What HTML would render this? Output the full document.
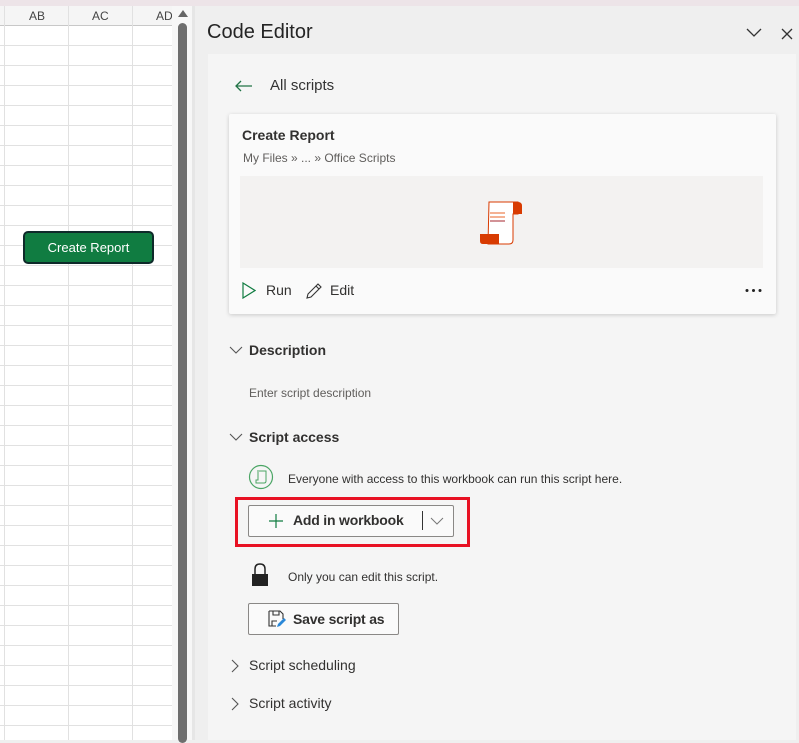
<!DOCTYPE html>
<html><head><meta charset="utf-8"><style>
*{margin:0;padding:0;box-sizing:border-box}
body{width:799px;height:740px;overflow:hidden;background:#efefef;font-family:"Liberation Sans",sans-serif;position:relative;color:#242424}
.a{position:absolute}
.t{position:absolute;white-space:nowrap}
</style></head><body>
<div class="a" style="left:0;top:0;width:799px;height:6px;background:#ede4e8"></div>
<div class="a" style="left:0;top:6px;width:172px;height:20px;background:#f5f5f5;border-bottom:1px solid #c8c8c8"></div>
<div class="a" style="left:0;top:26px;width:172px;height:714px;background:#fff;
background-image:repeating-linear-gradient(to bottom,transparent 0,transparent 19px,#e1e1e1 19px,#e1e1e1 20px)"></div>
<div class="a" style="left:4px;top:6px;width:1px;height:734px;background:#e1e1e1"></div>
<div class="a" style="left:68px;top:6px;width:1px;height:734px;background:#e1e1e1"></div>
<div class="a" style="left:132px;top:6px;width:1px;height:734px;background:#e1e1e1"></div>
<div class="t" style="left:29px;top:9px;font-size:12px;color:#444">AB</div>
<div class="t" style="left:92px;top:9px;font-size:12px;color:#444">AC</div>
<div class="t" style="left:156px;top:9px;font-size:12px;color:#444">AD</div>
<div class="a" style="left:23px;top:231px;width:131px;height:33px;background:#107c41;border:2px solid #0e2a2a;border-radius:5px;color:#fff;font-size:13px;text-align:center;line-height:29px">Create Report</div>
<div class="a" style="left:172px;top:6px;width:20px;height:734px;background:#f7f7f7"></div>
<div class="a" style="left:178px;top:10px;width:0;height:0;border-left:5px solid transparent;border-right:5px solid transparent;border-bottom:7px solid #666"></div>
<div class="a" style="left:178px;top:23px;width:9px;height:720px;background:#6e6e6e;border-radius:5px"></div>
<div class="a" style="left:192px;top:6px;width:3px;height:734px;background:#e6e6e6"></div>
<div class="t" style="left:207px;top:21px;font-size:20px;color:#242424">Code Editor</div>
<svg class="a" style="left:746px;top:28px" width="16" height="10"><path d="M1 1L8 8L15 1" stroke="#333" stroke-width="1.3" fill="none"/></svg>
<svg class="a" style="left:781px;top:28px" width="12" height="12"><path d="M1 1L11 11M11 1L1 11" stroke="#333" stroke-width="1.3"/></svg>
<div class="a" style="left:208px;top:54px;width:588px;height:686px;background:#f5f5f5"></div>
<svg class="a" style="left:235px;top:80px" width="18" height="12"><path d="M1 6H17M6 1L1 6L6 11" stroke="#217346" stroke-width="1.3" fill="none"/></svg>
<div class="t" style="left:270px;top:77px;font-size:15px;color:#333">All scripts</div>
<div class="a" style="left:229px;top:114px;width:547px;height:200px;background:#fafafa;box-shadow:0 1px 4px rgba(0,0,0,.18);border-radius:2px"></div>
<div class="t" style="left:242px;top:127px;font-size:14px;font-weight:bold;color:#323130">Create Report</div>
<div class="t" style="left:243px;top:151px;font-size:12px;color:#605e5c">My Files » ... » Office Scripts</div>
<div class="a" style="left:240px;top:176px;width:523px;height:92px;background:#f3f2f1"></div>
<svg class="a" style="left:480px;top:200px" width="45" height="45" viewBox="0 0 45 45">
<path d="M9 2H38V14H33V40Q33 44 29 44H8Z" fill="#fff" stroke="#d83b01" stroke-width="1"/>
<path d="M33 2H38Q42 2 42 6V14H33Z" fill="#d83b01"/>
<path d="M0 34H19V44H3Q0 44 0 41Z" fill="#d83b01"/>
<path d="M10 13H25M10 17H25" stroke="#e8652a" stroke-width="1"/>
<path d="M10 21H25" stroke="#a4262c" stroke-width="1"/>
</svg>
<svg class="a" style="left:242px;top:282px" width="14" height="17"><path d="M1 1L13 8.5L1 16Z" stroke="#107c41" stroke-width="1.2" fill="none"/></svg>
<div class="t" style="left:266px;top:282px;font-size:14px;color:#323130">Run</div>
<svg class="a" style="left:305px;top:282px" width="18" height="18"><path d="M2 16L3 12L13 2L16 5L6 15Z M11 4L14 7" stroke="#333" stroke-width="1.1" fill="none"/></svg>
<div class="t" style="left:330px;top:282px;font-size:14px;color:#323130">Edit</div>
<svg class="a" style="left:745px;top:288px" width="18" height="5"><circle cx="2" cy="2.5" r="1.5" fill="#222"/><circle cx="8.5" cy="2.5" r="1.5" fill="#222"/><circle cx="15" cy="2.5" r="1.5" fill="#222"/></svg>
<svg class="a" style="left:229px;top:346px" width="14" height="9"><path d="M1 1L7 7L13 1" stroke="#555" stroke-width="1.1" fill="none"/></svg>
<div class="t" style="left:249px;top:342px;font-size:14px;font-weight:bold;color:#323130">Description</div>
<div class="t" style="left:249px;top:386px;font-size:12px;color:#605e5c">Enter script description</div>
<svg class="a" style="left:229px;top:433px" width="14" height="9"><path d="M1 1L7 7L13 1" stroke="#555" stroke-width="1.1" fill="none"/></svg>
<div class="t" style="left:249px;top:429px;font-size:14px;font-weight:bold;color:#323130">Script access</div>
<svg class="a" style="left:248px;top:464px" width="26" height="26"><circle cx="13" cy="13" r="11.5" fill="none" stroke="#4aa564" stroke-width="1.2"/><path d="M9 7H18V17Q18 19 16 19H8V16H10V8" fill="none" stroke="#4aa564" stroke-width="1"/></svg>
<div class="t" style="left:288px;top:472px;font-size:12px;color:#323130">Everyone with access to this workbook can run this script here.</div>
<div class="a" style="left:235px;top:497px;width:235px;height:50px;border:3px solid #e81123"></div>
<div class="a" style="left:248px;top:505px;width:206px;height:32px;background:#fafafa;border:1px solid #8a8886;border-radius:2px"></div>
<svg class="a" style="left:268px;top:513px" width="16" height="16"><path d="M8 1V15M1 8H15" stroke="#107c41" stroke-width="1.2"/></svg>
<div class="t" style="left:293px;top:512px;font-size:14px;font-weight:bold;color:#323130;letter-spacing:-0.2px">Add in workbook</div>
<div class="a" style="left:422px;top:511px;width:1px;height:19px;background:#333"></div>
<svg class="a" style="left:430px;top:517px" width="14" height="8"><path d="M1 1L7 7L13 1" stroke="#777" stroke-width="1" fill="none"/></svg>
<svg class="a" style="left:251px;top:563px" width="18" height="24"><path d="M4 11V6Q4 1 9 1Q14 1 14 6V11" fill="none" stroke="#222" stroke-width="1.5"/><rect x="1" y="11" width="16" height="12" fill="#222"/></svg>
<div class="t" style="left:288px;top:570px;font-size:12px;color:#323130">Only you can edit this script.</div>
<div class="a" style="left:248px;top:603px;width:151px;height:32px;background:#fafafa;border:1px solid #8a8886;border-radius:2px"></div>
<svg class="a" style="left:267px;top:609px" width="20" height="20"><path d="M2 2H13L16 5V10M2 2V17H9M6 2V6H12V2M5 17V12H10" fill="none" stroke="#333" stroke-width="1.1"/><path d="M10 18L11 15L17 9L19 11L13 17Z" fill="#2b88d8"/></svg>
<div class="t" style="left:293px;top:611px;font-size:14px;font-weight:bold;color:#323130;letter-spacing:-0.2px">Save script as</div>
<svg class="a" style="left:231px;top:659px" width="8" height="14"><path d="M1 1L7 7L1 13" stroke="#555" stroke-width="1.1" fill="none"/></svg>
<div class="t" style="left:249px;top:657px;font-size:14px;color:#323130">Script scheduling</div>
<svg class="a" style="left:231px;top:697px" width="8" height="14"><path d="M1 1L7 7L1 13" stroke="#555" stroke-width="1.1" fill="none"/></svg>
<div class="t" style="left:249px;top:695px;font-size:14px;color:#323130">Script activity</div>
</body></html>
